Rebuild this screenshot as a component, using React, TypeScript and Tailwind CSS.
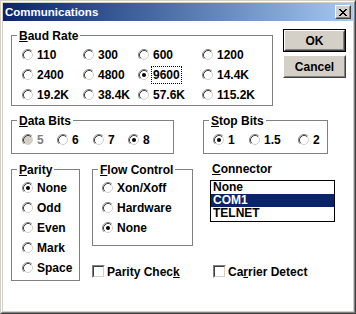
import React from 'react';

const RadioIcon = ({ checked = false, disabled = false }: { checked?: boolean; disabled?: boolean }) => (
  <svg width="12" height="12" viewBox="0 0 12 12" className="block shrink-0">
    <circle cx="6" cy="6" r="4.5" fill={disabled ? '#d4d0c8' : '#ffffff'} />
    <path d="M2.11 9.89A5.5 5.5 0 0 1 9.89 2.11" stroke="#808080" fill="none" />
    <path d="M9.89 2.11A5.5 5.5 0 0 1 2.11 9.89" stroke="#ffffff" fill="none" />
    <path d="M2.82 9.18A4.5 4.5 0 0 1 9.18 2.82" stroke="#404040" fill="none" />
    <path d="M9.18 2.82A4.5 4.5 0 0 1 2.82 9.18" stroke="#d4d0c8" fill="none" />
    {checked && <circle cx="6" cy="6" r="2" fill="#000000" />}
  </svg>
);

const Radio = ({
  label,
  checked = false,
  disabled = false,
  focus = false,
}: {
  label: string;
  checked?: boolean;
  disabled?: boolean;
  focus?: boolean;
}) => (
  <div className="flex h-[20px] items-center gap-[3px] whitespace-nowrap">
    <RadioIcon checked={checked} disabled={disabled} />
    <span
      className={
        (disabled ? 'text-[#808080] ' : '') +
        (focus ? 'outline-1 outline-dotted outline-black outline-offset-[1px]' : '')
      }
    >
      {label}
    </span>
  </div>
);

const CheckBox = () => (
  <div className="h-[13px] w-[13px] shrink-0 border border-t-[#808080] border-l-[#808080] border-r-white border-b-white">
    <div className="h-full w-full border border-t-[#404040] border-l-[#404040] border-r-[#d4d0c8] border-b-[#d4d0c8] bg-white" />
  </div>
);

const Group = ({
  label,
  className,
  children,
}: {
  label: React.ReactNode;
  className: string;
  children?: React.ReactNode;
}) => (
  <div className={'relative border border-[#808080] ' + className}>
    <div className="absolute left-[5px] top-[-7px] whitespace-nowrap bg-white px-[2px]">{label}</div>
    {children}
  </div>
);

const U = ({ children }: { children: React.ReactNode }) => <span className="underline">{children}</span>;

const CloseGlyph = () => (
  <svg width="8" height="7" viewBox="0 0 8 7" className="block">
    <g fill="#000000">
      <rect x="0" y="0" width="2" height="1" />
      <rect x="6" y="0" width="2" height="1" />
      <rect x="1" y="1" width="2" height="1" />
      <rect x="5" y="1" width="2" height="1" />
      <rect x="2" y="2" width="4" height="1" />
      <rect x="3" y="3" width="2" height="1" />
      <rect x="2" y="4" width="4" height="1" />
      <rect x="1" y="5" width="2" height="1" />
      <rect x="5" y="5" width="2" height="1" />
      <rect x="0" y="6" width="2" height="1" />
      <rect x="6" y="6" width="2" height="1" />
    </g>
  </svg>
);

export default function App() {
  return (
    <div className="h-[314px] w-[356px] bg-white font-['Liberation_Sans',Arial,sans-serif] text-[12px] font-bold leading-[14px] text-black">
      <div className="h-full w-full border border-t-[#d4d0c8] border-l-[#d4d0c8] border-r-[#404040] border-b-[#404040]">
        <div className="h-full w-full border border-t-white border-l-white border-r-[#808080] border-b-[#808080]">
          <div className="flex h-full w-full flex-col border border-[#d4d0c8]">
            {/* Title bar */}
            <div className="flex h-[18px] shrink-0 items-center justify-between bg-linear-to-r from-[#0a246a] to-[#a6caf0] pl-[2px] pr-[2px]">
              <span className="text-[11.5px] text-white">Communications</span>
              <div className="h-[14px] w-[16px] border border-t-white border-l-white border-r-[#404040] border-b-[#404040]">
                <div className="flex h-full w-full items-center justify-center border border-t-[#d4d0c8] border-l-[#d4d0c8] border-r-[#808080] border-b-[#808080] bg-[#d4d0c8]">
                  <CloseGlyph />
                </div>
              </div>
            </div>

            {/* Body */}
            <div className="flex flex-1 flex-col bg-white pl-[8px]">
              {/* Row 1 */}
              <div className="flex items-start pt-[8px]">
                <Group
                  className="mt-[6px] h-[71px] w-[262px] shrink-0"
                  label={
                    <>
                      <U>B</U>aud Rate
                    </>
                  }
                >
                  <div className="grid grid-cols-[61px_55px_64px_auto] pl-[10px] pt-[9px]">
                    <Radio label="110" />
                    <Radio label="300" />
                    <Radio label="600" />
                    <Radio label="1200" />
                    <Radio label="2400" />
                    <Radio label="4800" />
                    <Radio label="9600" checked focus />
                    <Radio label="14.4K" />
                    <Radio label="19.2K" />
                    <Radio label="38.4K" />
                    <Radio label="57.6K" />
                    <Radio label="115.2K" />
                  </div>
                </Group>
                <div className="ml-[10px] flex flex-col gap-[3px]">
                  <div className="h-[23px] w-[63px] border border-black">
                    <div className="h-full w-full border border-t-white border-l-white border-r-[#404040] border-b-[#404040]">
                      <div className="flex h-full w-full items-center justify-center border border-t-[#d4d0c8] border-l-[#d4d0c8] border-r-[#808080] border-b-[#808080] bg-[#d4d0c8]">
                        OK
                      </div>
                    </div>
                  </div>
                  <div className="h-[23px] w-[63px] border border-t-white border-l-white border-r-[#404040] border-b-[#404040]">
                    <div className="flex h-full w-full items-center justify-center border border-t-[#d4d0c8] border-l-[#d4d0c8] border-r-[#808080] border-b-[#808080] bg-[#d4d0c8]">
                      Cancel
                    </div>
                  </div>
                </div>
              </div>

              {/* Row 2 */}
              <div className="mt-[14px] flex items-start">
                <Group
                  className="h-[34px] w-[163px] shrink-0"
                  label={
                    <>
                      <U>D</U>ata Bits
                    </>
                  }
                >
                  <div className="grid grid-cols-[35px_36px_35px_auto] pl-[10px] pt-[9px]">
                    <Radio label="5" disabled />
                    <Radio label="6" />
                    <Radio label="7" />
                    <Radio label="8" checked />
                  </div>
                </Group>
                <Group
                  className="ml-[29px] h-[34px] w-[125px] shrink-0"
                  label={
                    <>
                      <U>S</U>top Bits
                    </>
                  }
                >
                  <div className="grid grid-cols-[36px_49px_auto] pl-[9px] pt-[9px]">
                    <Radio label="1" checked />
                    <Radio label="1.5" />
                    <Radio label="2" />
                  </div>
                </Group>
              </div>

              {/* Row 3 */}
              <div className="mt-[15px] flex items-start">
                <Group
                  className="h-[112px] w-[69px] shrink-0"
                  label={
                    <>
                      <U>P</U>arity
                    </>
                  }
                >
                  <div className="flex flex-col pl-[10px] pt-[8px]">
                    <Radio label="None" checked />
                    <Radio label="Odd" />
                    <Radio label="Even" />
                    <Radio label="Mark" />
                    <Radio label="Space" />
                  </div>
                </Group>

                <div className="ml-[12px] flex flex-col">
                  <Group
                    className="h-[77px] w-[101px] shrink-0"
                    label={
                      <>
                        <U>F</U>low Control
                      </>
                    }
                  >
                    <div className="flex flex-col pl-[9px] pt-[8px]">
                      <Radio label="Xon/Xoff" />
                      <Radio label="Hardware" />
                      <Radio label="None" checked />
                    </div>
                  </Group>
                  <div className="mt-[19px] flex h-[13px] items-center gap-[2px] whitespace-nowrap">
                    <CheckBox />
                    <span>
                      Parity Chec<U>k</U>
                    </span>
                  </div>
                </div>

                <div className="-mt-[7px] ml-[17px] flex flex-col">
                  <div className="h-[14px] pl-[2px]">
                    <U>C</U>onnector
                  </div>
                  <div className="mt-[4px] flex h-[42px] w-[125px] flex-col border border-black bg-white">
                    <div className="h-[13px] pl-[2px] leading-[13px]">None</div>
                    <div className="h-[13px] bg-[#0a246a] pl-[2px] leading-[13px] text-white">COM1</div>
                    <div className="h-[13px] pl-[2px] leading-[13px]">TELNET</div>
                  </div>
                  <div className="ml-[3px] mt-[43px] flex h-[13px] items-center gap-[2px] whitespace-nowrap">
                    <CheckBox />
                    <span>
                      Ca<U>r</U>rier Detect
                    </span>
                  </div>
                </div>
              </div>
            </div>
          </div>
        </div>
      </div>
    </div>
  );
}
